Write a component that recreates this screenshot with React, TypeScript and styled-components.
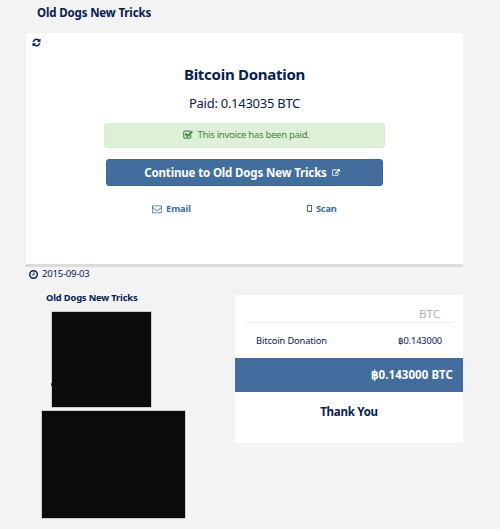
import React from 'react';
import styled, { createGlobalStyle } from 'styled-components';

const NAVY = '#06204f';
const BLUE = '#426d9d';

const GlobalStyle = createGlobalStyle`
  * { box-sizing: border-box; }
  body {
    margin: 0;
    background: #f3f3f3;
    color: ${NAVY};
    font-family: "Noto Sans", "Open Sans", sans-serif;
  }
`;

const Page = styled.main`
  display: flex;
  flex-direction: column;
  width: 500px;
  height: 529px;
  padding: 3px 37px 0 25px;
  overflow: hidden;
`;

const Text = styled.span<{ $size: number; $bold?: boolean; $track?: number }>`
  margin: 0;
  font-size: ${(p) => p.$size}px;
  font-weight: ${(p) => (p.$bold ? 700 : 400)};
  letter-spacing: ${(p) => p.$track ?? 0}px;
  line-height: 20px;
  white-space: nowrap;
`;

const Header = styled.header`
  display: flex;
  height: 30px;
  padding-left: 12px;
`;

const Card = styled.section`
  display: flex;
  flex-direction: column;
  align-items: center;
  height: 234px;
  background: #fff;
  border-bottom: 3px solid #dcdcdc;
  border-left: 1px solid #f0f0f0;
  border-radius: 2px 2px 0 0;
`;

const CardTools = styled.div`
  align-self: stretch;
  display: flex;
  height: 31px;
  padding: 5px 0 0 6px;
`;

const Title = styled.div`
  display: flex;
  height: 20px;
`;

const Amount = styled.div`
  display: flex;
  height: 36px;
  padding-top: 9px;
`;

const Alert = styled.div`
  display: flex;
  align-items: center;
  justify-content: center;
  gap: 4px;
  width: 281px;
  height: 25px;
  margin-top: 3px;
  padding: 0 0 1px 4px;
  color: #3f8246;
  background: #dff0d8;
  border: 1px solid #daedd1;
  border-radius: 3px;
`;

const ContinueButton = styled.button`
  display: flex;
  align-items: center;
  justify-content: center;
  gap: 5px;
  width: 277px;
  height: 27px;
  margin-top: 11px;
  padding: 0 5px 0 0;
  font-family: inherit;
  color: #fff;
  background: ${BLUE};
  border: 1px solid #3d6695;
  border-radius: 3px;
`;

const Actions = styled.div`
  display: grid;
  grid-template-columns: 155px 1fr;
  align-self: stretch;
  margin-top: 13px;
  padding-left: 126px;
  color: ${BLUE};
`;

const Action = styled.a`
  display: flex;
  align-items: center;
  gap: 4px;
`;

const PhoneGlyph = styled.i`
  width: 5px;
  height: 7px;
  margin-bottom: 2px;
  border: 1px solid ${BLUE};
`;

const DateRow = styled.div`
  display: flex;
  align-items: center;
  gap: 4px;
  height: 21px;
  padding: 0 0 7px 4px;
`;

const Details = styled.div`
  display: grid;
  grid-template-columns: 210px 228px;
  align-items: start;
`;

const Merchant = styled.div`
  display: flex;
  flex-direction: column;
  align-items: flex-start;
`;

const MerchantName = styled.div`
  display: flex;
  height: 24px;
  padding-left: 21px;
`;

const Redaction = styled.div<{ $w: number; $h: number; $left: number }>`
  width: ${(p) => p.$w}px;
  height: ${(p) => p.$h}px;
  margin: 0 0 4px ${(p) => p.$left}px;
  background: #0b0b0b;
  box-shadow: 0 0 0 0.5px #aaa;
`;

const Speck = styled.i`
  display: block;
  width: 1px;
  height: 3px;
  margin: 71px 0 0 -1px;
  background: #54403c;
`;

const Receipt = styled.section`
  display: flex;
  flex-direction: column;
  height: 148px;
  margin-top: 7px;
  background: #fff;
`;

const Currency = styled.div`
  display: flex;
  justify-content: flex-end;
  height: 28px;
  margin: 0 11px;
  padding: 9px 12px 0 0;
  color: #b3b3b3;
  border-bottom: 1px solid #ededed;
`;

const LineItem = styled.div`
  display: flex;
  justify-content: space-between;
  height: 35px;
  padding: 8px 21px 0;
`;

const Total = styled.div`
  display: flex;
  align-items: center;
  justify-content: flex-end;
  height: 34px;
  padding-right: 10px;
  color: #fff;
  background: ${BLUE};
`;

const Thanks = styled.div`
  display: flex;
  justify-content: center;
  padding-top: 10px;
`;

const Glyph = styled.svg<{ $size: number }>`
  flex: none;
  width: ${(p) => p.$size}px;
  height: ${(p) => p.$size}px;
  fill: currentColor;
`;

const paths = {
  refresh:
    'M1639 1056q0 5-1 7-64 268-268 434.500t-478 166.500q-146 0-282.500-55t-243.500-157l-129 129q-19 19-45 19t-45-19-19-45v-448q0-26 19-45t45-19h448q26 0 45 19t19 45-19 45l-137 137q71 66 161 102t187 36q134 0 250-65t186-179q11-17 53-117 8-23 30-23h192q13 0 22.500 9.500t9.500 22.500zm25-800v448q0 26-19 45t-45 19h-448q-26 0-45-19t-19-45 19-45l138-138q-148-137-349-137-134 0-250 65t-186 179q-11 17-53 117-8 23-30 23h-199q-13 0-22.500-9.500t-9.500-22.500v-7q65-268 270-434.500t480-166.500q146 0 284 55.500t245 156.500l130-129q19-19 45-19t45 19 19 45z',
  check:
    'M1472 930v318q0 119-84.500 203.500t-203.500 84.500h-832q-119 0-203.500-84.500t-84.500-203.500v-832q0-119 84.500-203.500t203.500-84.500h832q63 0 117 25 15 7 18 23 3 17-9 29l-49 49q-10 10-23 10-3 0-9-2-23-6-45-6h-832q-66 0-113 47t-47 113v832q0 66 47 113t113 47h832q66 0 113-47t47-113v-254q0-13 9-22l64-64q10-10 23-10 6 0 12 3 20 8 20 29zm231-489l-814 814q-24 24-57 24t-57-24l-430-430q-24-24-24-57t24-57l110-110q24-24 57-24t57 24l263 263 647-647q24-24 57-24t57 24l110 110q24 24 24 57t-24 57z',
  mail:
    'M1664 1504v-768q-32 36-69 66-268 206-426 338-51 43-83 67t-86.500 48.500-102.500 24.500h-2q-48 0-102.500-24.500t-86.500-48.500-83-67q-158-132-426-338-37-30-69-66v768q0 13 9.500 22.500t22.500 9.500h1472q13 0 22.500-9.500t9.500-22.500zm0-1051v-24.500l-.5-13-3-12.500-5.500-9-9-7.500-14-2.500h-1472q-13 0-22.500 9.500t-9.500 22.500q0 168 147 284 193 152 401 317 6 5 35 29.500t46 37.500 44.500 31.500 50.500 27.500 43 9h2q20 0 43-9t50.500-27.500 44.500-31.500 46-37.500 35-29.500q208-165 401-317 54-43 100.500-115.500t46.500-131.500zm128-37v1088q0 66-47 113t-113 47h-1472q-66 0-113-47t-47-113v-1088q0-66 47-113t113-47h1472q66 0 113 47t47 113z',
  external:
    'M1408 928v320q0 119-84.500 203.500t-203.500 84.500h-832q-119 0-203.500-84.500t-84.500-203.500v-832q0-119 84.500-203.500t203.500-84.500h704q14 0 23 9t9 23v64q0 14-9 23t-23 9h-704q-66 0-113 47t-47 113v832q0 66 47 113t113 47h832q66 0 113-47t47-113v-320q0-14 9-23t23-9h64q14 0 23 9t9 23zm384-864v512q0 26-19 45t-45 19-45-19l-176-176-652 652q-10 10-23 10t-23-10l-114-114q-10-10-10-23t10-23l652-652-176-176q-19-19-19-45t19-45 45-19h512q26 0 45 19t19 45z',
};

const StrongPath = styled.path<{ $stroke: number }>`
  stroke: currentColor;
  stroke-width: ${(p) => p.$stroke};
`;

function Icon({ name, size, stroke = 0 }: { name: keyof typeof paths; size: number; stroke?: number }) {
  return (
    <Glyph $size={size} viewBox="0 0 1792 1792" aria-hidden="true">
      <StrongPath d={paths[name]} $stroke={stroke} />
    </Glyph>
  );
}

function ClockIcon() {
  return (
    <Glyph $size={9} viewBox="0 0 18 18" aria-hidden="true">
      <circle cx="9" cy="9" r="7.5" fill="none" stroke="currentColor" strokeWidth="2.8" />
      <path d="M10 4.500v5.300H5.800" fill="none" stroke="currentColor" strokeWidth="1.800" />
    </Glyph>
  );
}

export default function App() {
  return (
    <>
      <GlobalStyle />
      <Page>
        <Header>
          <Text $size={11.5} $bold $track={-0.14}>Old Dogs New Tricks</Text>
        </Header>
        <Card>
          <CardTools>
            <Icon name="refresh" size={9} stroke={60} />
          </CardTools>
          <Title>
            <Text as="h1" $size={15} $bold $track={-0.27}>Bitcoin Donation</Text>
          </Title>
          <Amount>
            <Text $size={13} $track={-0.27}>Paid: 0.143035 BTC</Text>
          </Amount>
          <Alert>
            <Icon name="check" size={10} stroke={60} />
            <Text $size={9.5} $track={-0.27}>This invoice has been paid.</Text>
          </Alert>
          <ContinueButton>
            <Text $size={11.5} $bold $track={-0.15}>Continue to Old Dogs New Tricks</Text>
            <Icon name="external" size={8} stroke={60} />
          </ContinueButton>
          <Actions>
            <Action>
              <Icon name="mail" size={10} />
              <Text $size={9.3} $bold $track={-0.08}>Email</Text>
            </Action>
            <Action>
              <PhoneGlyph />
              <Text $size={9.3} $bold $track={-0.25}>Scan</Text>
            </Action>
          </Actions>
        </Card>
        <DateRow>
          <ClockIcon />
          <Text $size={9.5} $track={-0.2}>2015-09-03</Text>
        </DateRow>
        <Details>
          <Merchant>
            <MerchantName>
              <Text $size={9.3} $bold $track={-0.15}>Old Dogs New Tricks</Text>
            </MerchantName>
            <Redaction $w={99} $h={95} $left={27}>
              <Speck />
            </Redaction>
            <Redaction $w={143} $h={107} $left={17} />
          </Merchant>
          <Receipt>
            <Currency>
              <Text $size={11.5}>BTC</Text>
            </Currency>
            <LineItem>
              <Text $size={9.3} $track={-0.13}>Bitcoin Donation</Text>
              <Text $size={9.3} $track={-0.15}>฿0.143000</Text>
            </LineItem>
            <Total>
              <Text $size={11.5} $bold $track={0.06}>฿0.143000 BTC</Text>
            </Total>
            <Thanks>
              <Text $size={11.5} $bold $track={-0.25}>Thank You</Text>
            </Thanks>
          </Receipt>
        </Details>
      </Page>
    </>
  );
}
